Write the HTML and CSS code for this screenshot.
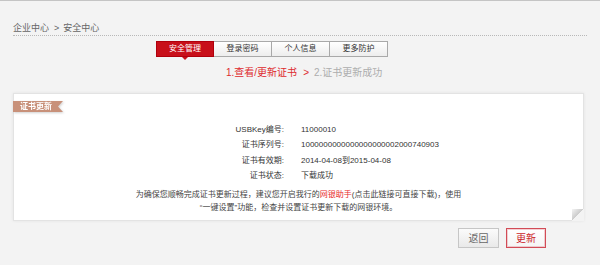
FILE: index.html
```html
<!DOCTYPE html>
<html lang="zh-CN">
<head>
<meta charset="utf-8">
<title>安全中心</title>
<link rel="stylesheet" href="styles.css">
</head>
<body>
<div class="topline"></div>
<div class="page">
  <div class="crumb">企业中心<span class="sep">&gt;</span>安全中心</div>
  <div class="tabs">
    <a class="tab active">安全管理</a>
    <a class="tab">登录密码</a>
    <a class="tab">个人信息</a>
    <a class="tab">更多防护</a>
  </div>
  <div class="steps"><span class="cur">1.查看/更新证书</span><span class="arrow">&gt;</span><span class="next">2.证书更新成功</span></div>
  <div class="card">
    <div class="ribbon-wrap"><div class="ribbon">证书更新</div></div>
    <dl class="info">
      <dt>USBKey编号:</dt><dd>11000010</dd>
      <dt>证书序列号:</dt><dd>1000000000000000000002000740903</dd>
      <dt>证书有效期:</dt><dd>2014-04-08到2015-04-08</dd>
      <dt>证书状态:</dt><dd>下载成功</dd>
    </dl>
    <p class="notice">为确保您顺畅完成证书更新过程，建议您开启我行的<a class="hl">网银助手</a>(点击此链接可直接下载)，使用<br>“一键设置”功能，检查并设置证书更新下载的网银环境。</p>
  </div>
  <div class="actions">
    <button class="btn">返回</button>
    <button class="btn primary">更新</button>
  </div>
</div>
</body>
</html>
```

FILE: styles.css
```css
html, body {
  margin: 0;
  padding: 0;
  background: #f3f3f3;
  font-family: "Liberation Sans", "Noto Sans CJK SC", sans-serif;
  color: #333;
}
.topline {
  height: 1px;
  background: #c4c4c4;
}
.page {
  padding: 0 16px 0 13px;
}
.crumb {
  margin-top: 21px;
  margin-right: -3px;
  height: 13px;
  line-height: 12px;
  font-size: 9px;
  color: #666;
  border-bottom: 1px dotted #b8b8b8;
}
.crumb .sep {
  margin: 0 4px 0 5px;
}
.tabs {
  display: flex;
  margin: 5px 0 0 143px;
}
.tab {
  position: relative;
  box-sizing: border-box;
  width: 58px;
  height: 16px;
  line-height: 14px;
  text-align: center;
  font-size: 8px;
  color: #333;
  border: 1px solid #a9a9a9;
  border-left: none;
  background: linear-gradient(#ffffff, #ededed);
}
.tab.active {
  border: 1px solid #b0000c;
  background: #c8101a;
  color: #fff;
}
.tab.active::after {
  content: "";
  position: absolute;
  left: 50%;
  bottom: -4px;
  margin-left: -3px;
  border-left: 3px solid transparent;
  border-right: 3px solid transparent;
  border-top: 3px solid #c8101a;
}
.steps {
  margin: 9px 0 0 213px;
  height: 14px;
  line-height: 14px;
  font-size: 10px;
}
.steps .cur { color: #de2a2e; }
.steps .arrow { color: #de2a2e; margin: 0 5px 0 6px; }
.steps .next { color: #adadad; }
.card {
  position: relative;
  margin-top: 13px;
  background: #fff;
  border: 1px solid #e3e3e3;
  box-shadow: 0 0 3px rgba(0,0,0,0.07);
  padding: 7px 0 5px;
}
.card::after {
  content: "";
  position: absolute;
  right: -1px;
  bottom: -1px;
  width: 12px;
  height: 12px;
  background: linear-gradient(315deg, #f3f3f3 50%, #c9c9c9 50%, #f4f4f4 100%);
}
.ribbon-wrap {
  margin-left: -1px;
  width: 50px;
  filter: drop-shadow(1px 1px 1px rgba(0,0,0,0.18));
}
.ribbon {
  height: 11px;
  line-height: 11px;
  padding-left: 7px;
  font-size: 8px;
  font-weight: bold;
  color: #fff;
  background: #c8917a;
  clip-path: polygon(0 0, 100% 0, calc(100% - 5px) 50%, 100% 100%, 0 100%);
}
.info {
  display: grid;
  grid-template-columns: 270px 1fr;
  column-gap: 17px;
  margin: 10px 0 0;
  font-size: 8px;
  line-height: 15.3px;
  color: #333;
}
.info dt {
  text-align: right;
}
.info dd {
  margin: 0;
}
.notice {
  margin: 5px 0 0;
  text-align: center;
  font-size: 8px;
  line-height: 13.3px;
  color: #444;
}
.notice .hl {
  color: #e8282c;
}
.actions {
  display: flex;
  justify-content: flex-end;
  gap: 7px;
  margin-top: 7px;
  padding-right: 38px;
}
.btn {
  box-sizing: border-box;
  width: 41px;
  height: 20px;
  padding: 0;
  font-family: inherit;
  font-size: 10px;
  color: #666;
  border: 1px solid #c6c6c6;
  background: linear-gradient(#fbfbfb, #e9e9e9);
}
.btn.primary {
  width: 40px;
  color: #cc1f2b;
  border: 1px solid #d24b56;
  box-shadow: inset 0 0 0 1px rgba(222,120,128,0.35);
  background: linear-gradient(#ffffff, #f5f5f5);
}
```
